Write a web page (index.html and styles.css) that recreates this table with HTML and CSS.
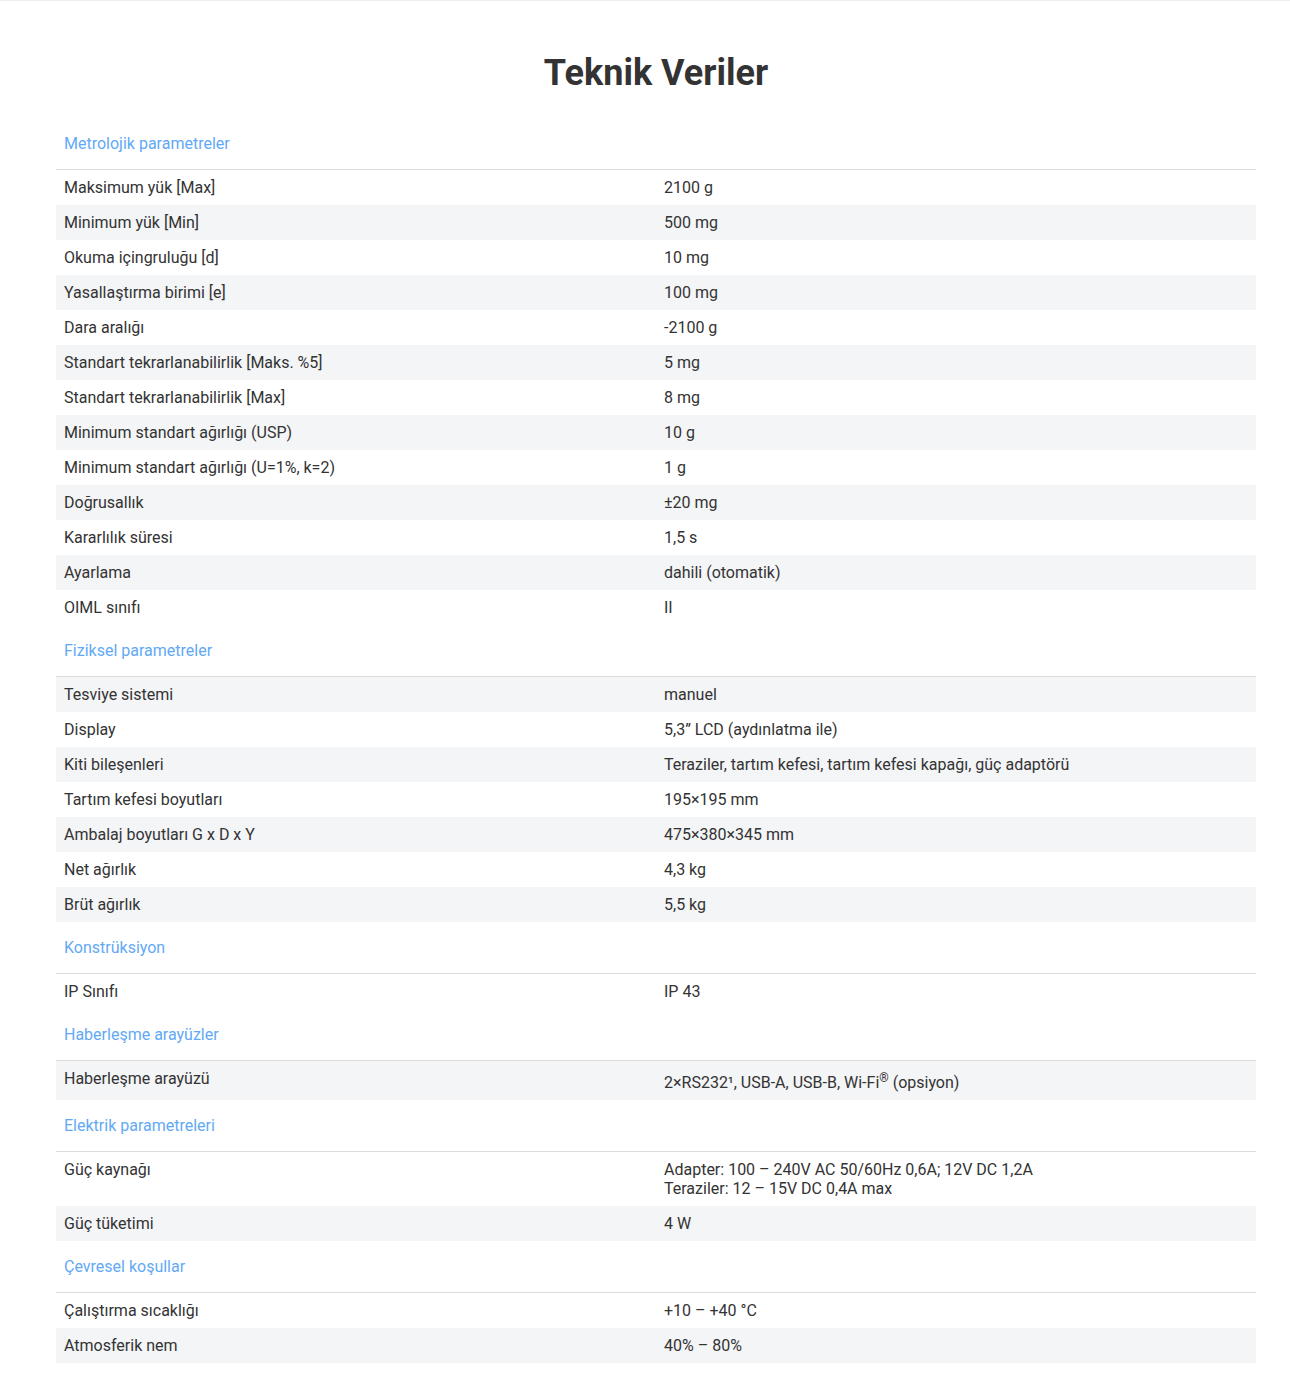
FILE: index.html
```html
<!DOCTYPE html>
<html lang="tr">
<head>
<meta charset="utf-8">
<title>Teknik Veriler</title>
<link rel="stylesheet" href="styles.css">
</head>
<body>
<div class="page">
  <h1 class="title">Teknik Veriler</h1>
  <table class="spec">
    <colgroup><col class="c1"><col class="c2"></colgroup>
    <tbody>
      <tr class="sec"><td colspan="2">Metrolojik parametreler</td></tr>
      <tr><td>Maksimum yük [Max]</td><td>2100 g</td></tr>
      <tr class="alt"><td>Minimum yük [Min]</td><td>500 mg</td></tr>
      <tr><td>Okuma içingruluğu [d]</td><td>10 mg</td></tr>
      <tr class="alt"><td>Yasallaştırma birimi [e]</td><td>100 mg</td></tr>
      <tr><td>Dara aralığı</td><td>-2100 g</td></tr>
      <tr class="alt"><td>Standart tekrarlanabilirlik [Maks. %5]</td><td>5 mg</td></tr>
      <tr><td>Standart tekrarlanabilirlik [Max]</td><td>8 mg</td></tr>
      <tr class="alt"><td>Minimum standart ağırlığı (USP)</td><td>10 g</td></tr>
      <tr><td>Minimum standart ağırlığı (U=1%, k=2)</td><td>1 g</td></tr>
      <tr class="alt"><td>Doğrusallık</td><td>±20 mg</td></tr>
      <tr><td>Kararlılık süresi</td><td>1,5 s</td></tr>
      <tr class="alt"><td>Ayarlama</td><td>dahili (otomatik)</td></tr>
      <tr><td>OIML sınıfı</td><td>II</td></tr>

      <tr class="sec"><td colspan="2">Fiziksel parametreler</td></tr>
      <tr class="alt"><td>Tesviye sistemi</td><td>manuel</td></tr>
      <tr><td>Display</td><td>5,3” LCD (aydınlatma ile)</td></tr>
      <tr class="alt"><td>Kiti bileşenleri</td><td>Teraziler, tartım kefesi, tartım kefesi kapağı, güç adaptörü</td></tr>
      <tr><td>Tartım kefesi boyutları</td><td>195×195 mm</td></tr>
      <tr class="alt"><td>Ambalaj boyutları G x D x Y</td><td>475×380×345 mm</td></tr>
      <tr><td>Net ağırlık</td><td>4,3 kg</td></tr>
      <tr class="alt"><td>Brüt ağırlık</td><td>5,5 kg</td></tr>

      <tr class="sec"><td colspan="2">Konstrüksiyon</td></tr>
      <tr><td>IP Sınıfı</td><td>IP 43</td></tr>

      <tr class="sec"><td colspan="2">Haberleşme arayüzler</td></tr>
      <tr class="alt"><td>Haberleşme arayüzü</td><td>2×RS232¹, USB-A, USB-B, Wi-Fi<sup>®</sup> (opsiyon)</td></tr>

      <tr class="sec"><td colspan="2">Elektrik parametreleri</td></tr>
      <tr><td>Güç kaynağı</td><td>Adapter: 100 – 240V AC 50/60Hz 0,6A; 12V DC 1,2A<br>Teraziler: 12 – 15V DC 0,4A max</td></tr>
      <tr class="alt"><td>Güç tüketimi</td><td>4 W</td></tr>

      <tr class="sec"><td colspan="2">Çevresel koşullar</td></tr>
      <tr><td>Çalıştırma sıcaklığı</td><td>+10 – +40 °C</td></tr>
      <tr class="alt"><td>Atmosferik nem</td><td>40% – 80%</td></tr>
    </tbody>
  </table>
</div>
</body>
</html>
```

FILE: styles.css
```css
html, body {
  margin: 0;
  padding: 0;
  background: #fff;
}
body {
  font-family: Roboto, "Liberation Sans", Arial, sans-serif;
  color: #333;
  border-top: 1px solid #efefef;
}
.page {
  width: 1200px;
  margin-left: 56px;
  padding-bottom: 24px;
}
.title {
  margin: 0;
  padding-top: 50px;
  padding-bottom: 23px;
  font-size: 36px;
  line-height: 44px;
  font-weight: 700;
  text-align: center;
  color: #333;
}
.spec {
  width: 100%;
  border-collapse: collapse;
  table-layout: fixed;
  font-size: 16px;
  line-height: 19px;
}
.spec .c1, .spec .c2 { width: 50%; }
.spec td {
  padding: 8px;
  vertical-align: top;
}
.spec tr.alt td {
  background: #f4f5f7;
}
.spec tr.sec td {
  padding: 16px 8px;
  color: #62a9f5;
  border-bottom: 1px solid #dcdcdc;
}
.spec sup {
  font-size: 12px;
  line-height: 19px;
  vertical-align: 6px;
}
```
